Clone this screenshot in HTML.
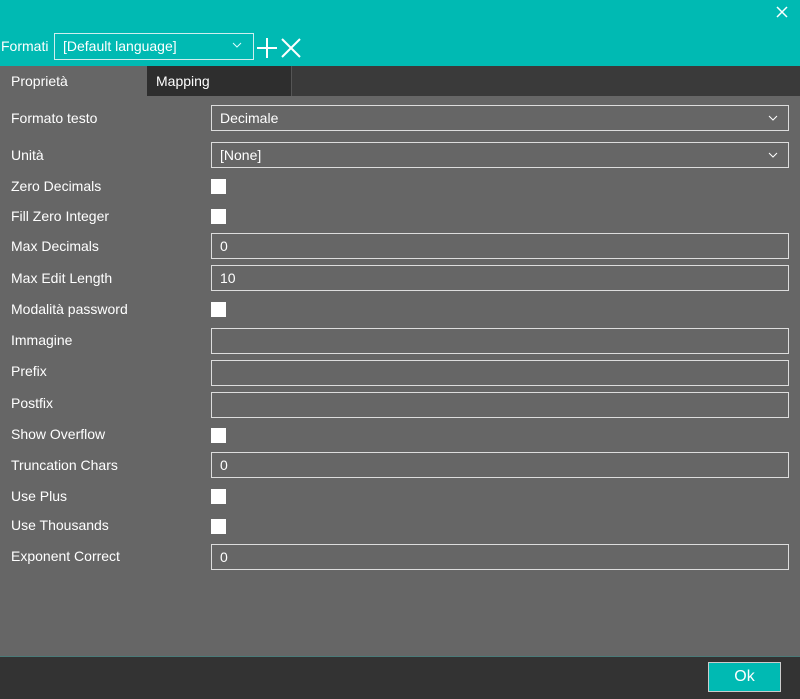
<!DOCTYPE html><html><head><style>
body{margin:0;width:800px;height:698px;background:#666;font-family:"Liberation Sans",sans-serif;font-size:14px;color:#fff;position:relative;overflow:hidden}
.a{position:absolute}
.hdr{left:0;top:0;width:800px;height:66px;background:#00bab3}
.lbl{left:11px}
.in{left:211px;width:576px;height:24px;border:1px solid #ddd;box-sizing:border-box;width:578px;height:26px;line-height:24px;padding-left:8px}
.cb{left:211px;width:15px;height:15px;background:#fff}
</style></head><body>
<div class="a hdr"></div>
<svg class="a" style="left:775px;top:5px" width="14" height="14"><path d="M2 2L12 12M12 2L2 12" stroke="#fff" stroke-width="1.5"/></svg>
<div class="a" style="left:1px;top:38px">Formati</div>
<div class="a" style="left:54px;top:33px;width:200px;height:27px;border:1px solid #cfeeee;box-sizing:border-box;padding-left:8px;line-height:25px">[Default language]</div>
<svg class="a" style="left:232px;top:42px" width="10" height="6"><path d="M1 1L5 5L9 1" stroke="#dff" fill="none"/></svg>
<svg class="a" style="left:256px;top:37px" width="46" height="22"><path d="M11 1V21M1 11H21M26 2L44 20M44 2L26 20" stroke="#fff" stroke-width="2"/></svg>
<div class="a" style="left:0;top:66px;width:800px;height:30px;background:#3a3a3a"></div>
<div class="a" style="left:0;top:66px;width:147px;height:30px;background:#666"></div>
<div class="a" style="left:147px;top:66px;width:144px;height:30px;background:#2e2e2e;border-right:1px solid #555"></div>
<div class="a" style="left:11px;top:73px">Proprietà</div>
<div class="a" style="left:156px;top:73px">Mapping</div>

<div class="a lbl" style="top:110px">Formato testo</div>
<div class="a in" style="top:105px">Decimale</div>
<svg class="a" style="left:768px;top:115px" width="10" height="6"><path d="M1 1L5 5L9 1" stroke="#fff" fill="none"/></svg>
<div class="a lbl" style="top:147px">Unità</div>
<div class="a in" style="top:142px">[None]</div>
<svg class="a" style="left:768px;top:152px" width="10" height="6"><path d="M1 1L5 5L9 1" stroke="#fff" fill="none"/></svg>
<div class="a lbl" style="top:178px">Zero Decimals</div><div class="a cb" style="top:179px"></div>
<div class="a lbl" style="top:208px">Fill Zero Integer</div><div class="a cb" style="top:209px"></div>
<div class="a lbl" style="top:238px">Max Decimals</div><div class="a in" style="top:233px">0</div>
<div class="a lbl" style="top:270px">Max Edit Length</div><div class="a in" style="top:265px">10</div>
<div class="a lbl" style="top:301px">Modalità password</div><div class="a cb" style="top:302px"></div>
<div class="a lbl" style="top:332px">Immagine</div><div class="a in" style="top:328px"></div>
<div class="a lbl" style="top:363px">Prefix</div><div class="a in" style="top:360px"></div>
<div class="a lbl" style="top:395px">Postfix</div><div class="a in" style="top:392px"></div>
<div class="a lbl" style="top:426px">Show Overflow</div><div class="a cb" style="top:428px"></div>
<div class="a lbl" style="top:457px">Truncation Chars</div><div class="a in" style="top:452px">0</div>
<div class="a lbl" style="top:488px">Use Plus</div><div class="a cb" style="top:489px"></div>
<div class="a lbl" style="top:517px">Use Thousands</div><div class="a cb" style="top:519px"></div>
<div class="a lbl" style="top:548px">Exponent Correct</div><div class="a in" style="top:544px">0</div>

<div class="a" style="left:0;top:656px;width:800px;height:42px;background:#333;border-top:1px solid #4a7a78"></div>
<div class="a" style="left:708px;top:662px;width:73px;height:30px;background:#00bab3;border:1px solid #ccc;box-sizing:border-box;text-align:center;line-height:28px;font-size:16px">Ok</div>
</body></html>
